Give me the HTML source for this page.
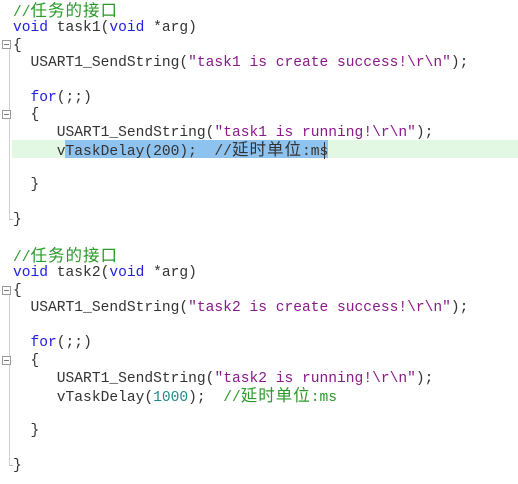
<!DOCTYPE html>
<html><head><meta charset="utf-8"><style>
body{margin:0;width:518px;height:484px;background:#fff;overflow:hidden;position:relative;font-family:"Liberation Mono","Noto Sans CJK SC",monospace;font-size:14.6px;color:#333}
.l{position:absolute;left:13px;height:17.5px;line-height:17.5px;white-space:pre;margin-top:2px}
.c{color:#2a9a2a}.k{color:#2020e0}.s{color:#8a1a8a}.n{color:#208a8a}
.z{font-size:16.5px;letter-spacing:1px;line-height:17px}
.g{position:absolute;background:#e3f8e3}
.sel{position:absolute;background:#8ec3f0}
.gut{position:absolute;left:9px;width:1px;background:#d0d0d0}
.fb{position:absolute;left:2px;width:9px;height:9px;border:1px solid #999;background:#fff;box-sizing:border-box}
.fb:after{content:"";position:absolute;left:1px;top:3px;width:5px;height:1px;background:#777}
.tk{position:absolute;left:9px;width:4px;height:1px;background:#bbb}
</style></head><body>
<div class="g" style="left:12px;top:140px;width:506px;height:18px"></div>
<div class="sel" style="left:65px;top:140px;width:263px;height:18px"></div>
<div class="gut" style="top:45px;height:175px"></div>
<div class="tk" style="top:219px"></div>
<div class="gut" style="top:290px;height:176px"></div>
<div class="tk" style="top:465px"></div>
<div class="fb" style="top:40px"></div>
<div class="fb" style="top:110px"></div>
<div class="fb" style="top:286px"></div>
<div class="fb" style="top:356px"></div>
<div style="position:absolute;left:324px;top:142px;width:1px;height:17px;background:#333"></div>

<div class="l c" style="top:1px">//<span class="z">任务的接口</span></div>
<div class="l" style="top:18px"><span class="k">void</span> task1(<span class="k">void</span> *arg)</div>
<div class="l" style="top:36px">{</div>
<div class="l" style="top:53px">  USART1_SendString(<span class="s">"task1 is create success!\r\n"</span>);</div>
<div class="l" style="top:88px">  <span class="k">for</span>(;;)</div>
<div class="l" style="top:105px">  {</div>
<div class="l" style="top:123px">     USART1_SendString(<span class="s">"task1 is running!\r\n"</span>);</div>
<div class="l" style="top:140px">     vTaskDelay(200);  //<span class="z">延时单位</span>:ms</div>
<div class="l" style="top:175px">  }</div>
<div class="l" style="top:210px">}</div>
<div class="l c" style="top:246px">//<span class="z">任务的接口</span></div>
<div class="l" style="top:263px"><span class="k">void</span> task2(<span class="k">void</span> *arg)</div>
<div class="l" style="top:281px">{</div>
<div class="l" style="top:298px">  USART1_SendString(<span class="s">"task2 is create success!\r\n"</span>);</div>
<div class="l" style="top:333px">  <span class="k">for</span>(;;)</div>
<div class="l" style="top:351px">  {</div>
<div class="l" style="top:369px">     USART1_SendString(<span class="s">"task2 is running!\r\n"</span>);</div>
<div class="l" style="top:386px">     vTaskDelay(<span class="n">1000</span>);  <span class="c">//<span class="z">延时单位</span>:ms</span></div>
<div class="l" style="top:421px">  }</div>
<div class="l" style="top:456px">}</div>
</body></html>
